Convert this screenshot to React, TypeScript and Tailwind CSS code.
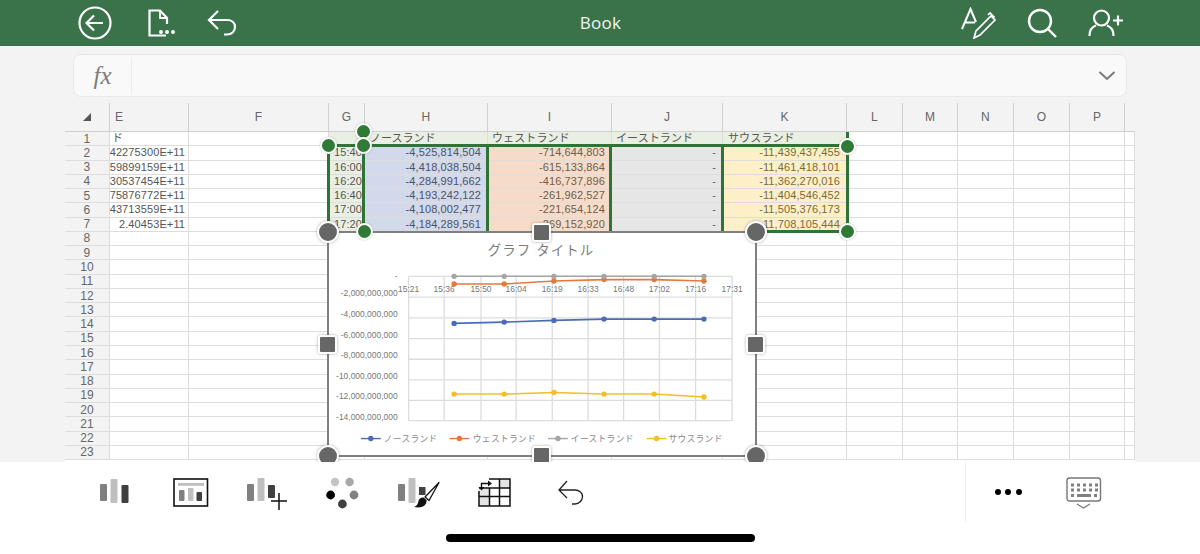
import React from 'react';

const columns = ['E', 'F', 'G', 'H', 'I', 'J', 'K', 'L', 'M', 'N', 'O', 'P', ''];

const eValues = ['42275300E+11', '59899159E+11', '30537454E+11', '75876772E+11', '43713559E+11', '2.40453E+11'];
const times = ['15:40', '16:00', '16:20', '16:40', '17:00', '17:20'];
const north = ['-4,525,814,504', '-4,418,038,504', '-4,284,991,662', '-4,193,242,122', '-4,108,002,477', '-4,184,289,561'];
const west = ['-714,644,803', '-615,133,864', '-416,737,896', '-261,962,527', '-221,654,124', '-269,152,920'];
const south = ['-11,439,437,455', '-11,461,418,101', '-11,362,270,016', '-11,404,546,452', '-11,505,376,173', '-11,708,105,444'];

const rowNumbers = Array.from({ length: 23 }, (_, i) => i + 1);

const lineCell = 'border-r-[1.5px] border-b-[1.5px] border-[#dddddd] overflow-hidden flex items-center whitespace-nowrap';

function getCell(col: string, row: number) {
  // row 1 is the table header, 2-7 hold the data
  const d = row - 2;
  if (row === 1) {
    if (col === 'E') return { cls: 'bg-white pl-[2px] text-[#555555]', text: 'ド' };
    if (col === 'G') return { cls: 'bg-[#e9efe3]', text: '' };
    if (col === 'H') return { cls: 'bg-[#e9efe3] pl-[5px] text-[#555555] tracking-[0px]', text: 'ノースランド' };
    if (col === 'I') return { cls: 'bg-[#e9efe3] pl-[4px] text-[#555555]', text: 'ウェストランド' };
    if (col === 'J') return { cls: 'bg-[#e9efe3] pl-[4px] text-[#555555]', text: 'イーストランド' };
    if (col === 'K') return { cls: 'bg-[#e9efe3] pl-[5px] text-[#555555]', text: 'サウスランド' };
    return { cls: 'bg-white', text: '' };
  }
  if (row <= 7) {
    if (col === 'E') return { cls: 'bg-white justify-end pr-[3px] text-[#555555]', text: eValues[d] };
    if (col === 'G') return { cls: 'bg-[#e9efe3] justify-end pr-[2px] text-[#555555]', text: times[d] };
    if (col === 'H') return { cls: 'bg-[#d2d9ea] justify-end pr-[6px] text-[#4d5266]', text: north[d] };
    if (col === 'I') return { cls: 'bg-[#f6dcc8] justify-end pr-[6px] text-[#6e5c50]', text: west[d] };
    if (col === 'J') return { cls: 'bg-[#e6e6e6] justify-end pr-[6px] text-[#5c5c5c]', text: '-' };
    if (col === 'K') return { cls: 'bg-[#fdf0c8] justify-end pr-[6px] text-[#7a6a38]', text: south[d] };
  }
  return { cls: 'bg-white', text: '' };
}

function GreenDot({ className }: { className: string }) {
  return (
    <div className={`absolute w-[17px] h-[17px] rounded-full bg-[#2f7a35] border-[2px] border-white shadow-[0_0_2px_rgba(0,0,0,0.25)] ${className}`} />
  );
}

function GreyDot({ className }: { className: string }) {
  return (
    <div className={`absolute w-[22px] h-[22px] rounded-full bg-[#666666] border-[2px] border-white shadow-[0_0_3px_rgba(0,0,0,0.35)] ${className}`} />
  );
}

function GreySquare({ className }: { className: string }) {
  return (
    <div className={`absolute w-[19px] h-[19px] rounded-[3px] bg-[#666666] border-[2px] border-white shadow-[0_0_3px_rgba(0,0,0,0.35)] ${className}`} />
  );
}

function Chart() {
  const gridY = [276, 297, 317.7, 338.7, 359.3, 380, 400.7, 421];
  const gridX = [409, 444.7, 481.7, 517, 553.3, 589.3, 625, 661, 697.3, 734];
  const timeLabels = ['15:21', '15:36', '15:50', '16:04', '16:19', '16:33', '16:48', '17:02', '17:16', '17:31'];
  const yLabels = ['-', '-2,000,000,000', '-4,000,000,000', '-6,000,000,000', '-8,000,000,000', '-10,000,000,000', '-12,000,000,000', '-14,000,000,000'];
  const xs = [454.7, 505, 555, 605.3, 655.7, 705.7];
  const series = [
    { color: '#4a6cb8', ys: [323.3, 322, 320.3, 319, 319, 319] },
    { color: '#e17b3c', ys: [283.7, 283.7, 280.7, 279.3, 279.3, 280.7] },
    { color: '#a5a5a5', ys: [276, 276, 276, 276, 276, 276] },
    { color: '#f6bd2b', ys: [394.3, 394.3, 392.7, 394.3, 394.3, 397.3] },
  ];
  const legend = [
    { color: '#4a6cb8', x1: 361, text: 'ノースランド', tx: 384 },
    { color: '#e17b3c', x1: 450, text: 'ウェストランド', tx: 473.5 },
    { color: '#a5a5a5', x1: 549, text: 'イーストランド', tx: 572 },
    { color: '#f6bd2b', x1: 648, text: 'サウスランド', tx: 670 },
  ];
  const font = '"Liberation Sans", "Noto Sans CJK JP", sans-serif';

  return (
    <div className="absolute left-[262px] top-[128px] w-[430px] h-[226px] bg-white border-[2px] border-[#808080]">
      <svg viewBox="329 233 428 222" className="w-full h-full block" fontFamily={font}>
        <text x="542" y="255" fontSize="13.5" letterSpacing="1.1" fill="#7c7c7c" textAnchor="middle">グラフ タイトル</text>
        {gridY.map((y) => (
          <line key={y} x1="409" x2="734" y1={y} y2={y} stroke="#dcdcdc" strokeWidth="1.3" />
        ))}
        {gridX.map((x) => (
          <line key={x} x1={x} x2={x} y1="276" y2="421" stroke="#dcdcdc" strokeWidth="1.3" />
        ))}
        {timeLabels.map((t, i) => (
          <text key={t} x={gridX[i]} y="291.8" fontSize="8.5" fill="#777777" textAnchor="middle">{t}</text>
        ))}
        {yLabels.map((t, i) => (
          <text key={t} x="398" y={gridY[i] + (i === 0 ? 1 : -0.5) + (i === 0 ? 0 : -0.5) + (i === 0 ? 2 : 0)} fontSize="8.5" fill="#777777" textAnchor="end">{t}</text>
        ))}
        {series.map((s) => (
          <g key={s.color}>
            <polyline points={s.ys.map((y, i) => `${xs[i]},${y}`).join(' ')} fill="none" stroke={s.color} strokeWidth="1.6" />
            {s.ys.map((y, i) => (
              <circle key={i} cx={xs[i]} cy={y} r="2.7" fill={s.color} />
            ))}
          </g>
        ))}
        {legend.map((l) => (
          <g key={l.text}>
            <line x1={l.x1} x2={l.x1 + 20} y1="439" y2="439" stroke={l.color} strokeWidth="1.4" />
            <circle cx={l.x1 + 10} cy="439" r="2.7" fill={l.color} />
            <text x={l.tx} y="442.5" fontSize="8.8" letterSpacing="0.3" fill="#8a8a8a">{l.text}</text>
          </g>
        ))}
      </svg>
    </div>
  );
}

function BarsIcon() {
  return (
    <svg width="29" height="36" viewBox="0 0 29 36" className="shrink-0">
      <rect x="0" y="8" width="7" height="17" rx="1" fill="#808080" />
      <rect x="10.5" y="3" width="7" height="24" rx="1" fill="#bfbfbf" />
      <rect x="21.5" y="9" width="7" height="18" rx="1" fill="#404040" />
    </svg>
  );
}

function LayoutIcon() {
  return (
    <svg width="36" height="36" viewBox="0 0 36 36" className="shrink-0 ml-[44px]">
      <rect x="1" y="3" width="33.5" height="27" fill="none" stroke="#111111" strokeWidth="1.6" />
      <rect x="5" y="7" width="26" height="2.8" fill="#bfbfbf" />
      <rect x="6" y="14" width="5.5" height="11" rx="1" fill="#808080" />
      <rect x="15" y="12" width="5.5" height="13" rx="1" fill="#bfbfbf" />
      <rect x="23.5" y="16" width="5.5" height="9" rx="1" fill="#404040" />
    </svg>
  );
}

function AddChartIcon() {
  return (
    <svg width="41" height="36" viewBox="0 0 41 36" className="shrink-0 ml-[38px]">
      <rect x="0" y="8" width="7" height="17" rx="1" fill="#808080" />
      <rect x="10.5" y="2" width="7" height="23" rx="1" fill="#bfbfbf" />
      <rect x="21" y="9" width="7" height="13" rx="1" fill="#404040" />
      <path d="M24 25h16M32 17v17" stroke="#111111" strokeWidth="1.5" fill="none" />
    </svg>
  );
}

function DotsIcon() {
  return (
    <svg width="34" height="36" viewBox="0 0 34 36" className="shrink-0 ml-[38px]">
      <circle cx="9" cy="6" r="4.2" fill="#c4c4c4" />
      <circle cx="23.6" cy="6" r="4.2" fill="#a8a8a8" />
      <circle cx="4.6" cy="19" r="4.4" fill="#000000" />
      <circle cx="28" cy="19" r="4.4" fill="#808080" />
      <circle cx="16.4" cy="28" r="4.4" fill="#404040" />
    </svg>
  );
}

function BrushIcon() {
  return (
    <svg width="43" height="36" viewBox="0 0 43 36" className="shrink-0 ml-[38px]">
      <rect x="0" y="8" width="7" height="17" rx="1" fill="#808080" />
      <rect x="10.5" y="2" width="7" height="25" rx="1" fill="#bfbfbf" />
      <rect x="21" y="11" width="6.5" height="8" fill="#404040" />
      <path d="M16 31c3-1 4-3 4.5-6 .5-2.500 3-4 5-3.500l3 2.500c.5 3-1.500 6-5 7-2.500.7-5 .5-7.500 0z" fill="#111111" />
      <path d="M27 21L41 6.500 31 24.500z" fill="#ffffff" stroke="#111111" strokeWidth="1.3" strokeLinejoin="round" />
    </svg>
  );
}

function SwitchTableIcon() {
  return (
    <svg width="33" height="36" viewBox="0 0 33 36" className="shrink-0 ml-[37px]">
      <rect x="1" y="12" width="10" height="18" fill="#e4e4e4" />
      <rect x="22" y="3" width="10" height="9" fill="#e4e4e4" />
      <path d="M11 3h21v27H1V15" fill="none" stroke="#111111" strokeWidth="1.5" />
      <path d="M1 20.500h31M1 12h31M11.500 12v18M21.500 3v27" fill="none" stroke="#111111" strokeWidth="1.5" />
      <path d="M3.500 12V7.500h8" fill="none" stroke="#111111" strokeWidth="1.4" />
      <path d="M10 4.500l4 3-4 3zM0.500 11h6l-3 3.500z" fill="#111111" />
    </svg>
  );
}

function UndoIcon() {
  return (
    <svg width="26" height="36" viewBox="0 0 26 36" className="shrink-0 ml-[47px]">
      <path d="M9 5L1 14l8 8M1 14h16c4 0 7.500 2.500 7.500 6.500S21 28 17 28h-3" fill="none" stroke="#222222" strokeWidth="1.3" />
    </svg>
  );
}

function KeyboardIcon() {
  const keyRows = [7.5, 12.5];
  const keyCols = [5, 11, 17, 23, 29];
  return (
    <svg width="36" height="36" viewBox="0 0 36 36" className="shrink-0 ml-[44px]">
      <rect x="1" y="2" width="33.5" height="23" rx="2.500" fill="none" stroke="#777777" strokeWidth="1.4" />
      {keyRows.map((y) => keyCols.map((x) => <rect key={`${x}-${y}`} x={x} y={y} width="3" height="3" fill="#808080" />))}
      <rect x="5" y="18" width="3" height="3" fill="#808080" />
      <rect x="11" y="18" width="14" height="3" fill="#808080" />
      <rect x="28" y="18" width="3" height="3" fill="#808080" />
      <path d="M11 28l6.500 4 6.500-4" fill="none" stroke="#777777" strokeWidth="1.2" />
    </svg>
  );
}

export default function App() {
  const sheetFont = 'font-["Liberation_Sans","Noto_Sans_CJK_JP",sans-serif]';

  return (
    <div className={`w-[1200px] h-[554px] bg-[#f3f3f3] flex flex-col overflow-hidden ${sheetFont}`}>
      {/* Top bar */}
      <div className="h-[46px] shrink-0 bg-[#3a7349] flex items-center text-white">
        <div className="flex-1 flex items-center pl-[77px]">
          <svg width="36" height="36" viewBox="0 0 36 36" fill="none" stroke="white" strokeWidth="2.2">
            <circle cx="18" cy="18" r="15.500" />
            <path d="M26 18H10M17 10.500L9.500 18l7.500 7.500" />
          </svg>
          <svg width="31" height="30" viewBox="0 0 31 30" fill="none" stroke="white" strokeWidth="2.2" className="ml-[33px]">
            <path d="M20 27.500H3.500V2.500H14l7 7.500v6" />
            <path d="M14 2.500V10h7" strokeWidth="1.8" />
            <circle cx="15" cy="24" r="2" fill="white" stroke="none" />
            <circle cx="21" cy="24" r="2" fill="white" stroke="none" />
            <circle cx="27" cy="24" r="2" fill="white" stroke="none" />
          </svg>
          <svg width="30" height="28" viewBox="0 0 30 28" fill="none" stroke="white" strokeWidth="2.2" className="ml-[30px]">
            <path d="M11 2L2 11l9 9M2 11h18c4.500 0 8 2.500 8 7s-3.500 7.500-8 7.500h-3" />
          </svg>
        </div>
        <div className="text-[17px] tracking-[0.3px] font-['Open_Sans',sans-serif] text-[#f1f5f1]">Book</div>
        <div className="flex-1 flex items-center justify-end pr-[76px]">
          <svg width="36" height="32" viewBox="0 0 36 32" fill="none" stroke="white" strokeWidth="2">
            <path d="M1 22L9.500 2l5.500 13M4 15.500h10" />
            <path d="M13 31l2-7 15-15 4 4-15 15zM27 8l2-2 4 4-1 2" strokeWidth="1.7" />
          </svg>
          <svg width="30" height="30" viewBox="0 0 30 30" fill="none" stroke="white" strokeWidth="2.4" className="ml-[30px]">
            <circle cx="13" cy="13" r="11" />
            <path d="M21 21l8 8" />
          </svg>
          <svg width="36" height="30" viewBox="0 0 36 30" fill="none" stroke="white" strokeWidth="2.2" className="ml-[31px]">
            <circle cx="13.500" cy="10" r="7.500" />
            <path d="M1.500 28c0-6 2-9 6.500-10.500M25.500 28c0-6-2-9-6.500-10.500M25 12.500h10M30 7.500v10" />
          </svg>
        </div>
      </div>

      {/* Formula bar */}
      <div className="mt-[8px] ml-[73px] w-[1054px] h-[43px] shrink-0 bg-[#f9f9f9] border border-[#e9e9e9] rounded-[8px] flex items-center">
        <div className="w-[58px] h-[36px] border-r border-[#ececec] flex items-center justify-center font-['Liberation_Serif',serif] italic text-[25px] text-[#7d7d7d]">
          fx
        </div>
        <div className="flex-1" />
        <svg width="18" height="12" viewBox="0 0 18 12" fill="none" stroke="#7a7a7a" strokeWidth="2" className="mr-[10px]">
          <path d="M1.500 2l7.500 7 7.500-7" />
        </svg>
      </div>

      {/* Sheet */}
      <div className="mt-[6px] ml-[65px] w-[1070px] flex-1 relative overflow-hidden bg-white">
        <div className="grid grid-cols-[45px_79px_140px_36px_123px_124px_111px_124px_56px_55px_56px_56px_55px_10px] grid-rows-[29px_repeat(23,14.27px)] text-[11px] leading-none tracking-[0.1px]">
          <div className="bg-[#f3f3f3] border-r-[1.5px] border-b-[1.5px] border-[#cfcfcf] flex items-end justify-end pr-[18px] pb-[10px]">
            <svg width="8" height="8" viewBox="0 0 8 8">
              <path d="M8 0v8H0z" fill="#555555" />
            </svg>
          </div>
          {columns.map((c, i) => (
            <div
              key={i}
              className={`bg-[#f3f3f3] border-b-[1.5px] border-[#cfcfcf] flex items-center text-[12px] text-[#666666] pb-[1px] ${c === 'E' ? 'pl-[5px]' : 'justify-center'} ${c === '' ? '' : 'border-r-[1.5px]'}`}
            >
              {c}
            </div>
          ))}
          {rowNumbers.map((row) => (
            <React.Fragment key={row}>
              <div className="bg-[#f3f3f3] border-r-[1.5px] border-b-[1.5px] border-[#dddddd] flex items-center justify-center text-[12px] text-[#666666] overflow-hidden">
                {row}
              </div>
              {columns.map((c, i) => {
                const cell = getCell(c, row);
                return (
                  <div key={i} className={`${lineCell} ${cell.cls}`}>
                    {cell.text}
                  </div>
                );
              })}
            </React.Fragment>
          ))}
        </div>

        {/* Selected ranges */}
        <div className="absolute left-[263px] top-[41px] w-[519px] h-[3px] bg-[#2f7436]" />
        <div className="absolute left-[262px] top-[42px] w-[3px] h-[87px] bg-[#2f7436]" />
        <div className="absolute left-[297px] top-[42px] w-[3px] h-[87px] bg-[#2f7436]" />
        <div className="absolute left-[421px] top-[42px] w-[3px] h-[87px] bg-[#2f7436]" />
        <div className="absolute left-[544px] top-[42px] w-[3px] h-[87px] bg-[#2f7436]" />
        <div className="absolute left-[656px] top-[42px] w-[3px] h-[87px] bg-[#2f7436]" />
        <div className="absolute left-[781px] top-[29px] w-[3px] h-[100px] bg-[#2f7436]" />
        <div className="absolute left-[691px] top-[127px] w-[93px] h-[3px] bg-[#2f7436]" />

        <Chart />

        <GreenDot className="left-[255px] top-[34px]" />
        <GreenDot className="left-[290px] top-[20px]" />
        <GreenDot className="left-[290px] top-[34px]" />
        <GreenDot className="left-[291px] top-[120px]" />
        <GreenDot className="left-[774px] top-[35px]" />
        <GreenDot className="left-[774px] top-[120px]" />

        <GreyDot className="left-[252px] top-[118px]" />
        <GreyDot className="left-[680px] top-[118px]" />
        <GreyDot className="left-[252px] top-[342px]" />
        <GreyDot className="left-[680px] top-[342px]" />

        <GreySquare className="left-[467px] top-[120px]" />
        <GreySquare className="left-[253px] top-[232px]" />
        <GreySquare className="left-[681px] top-[232px]" />
        <GreySquare className="left-[467px] top-[343px]" />
      </div>

      {/* Bottom toolbar */}
      <div className="h-[92px] shrink-0 bg-white relative flex items-start pt-[14px] pl-[100px]">
        <BarsIcon />
        <LayoutIcon />
        <AddChartIcon />
        <DotsIcon />
        <BrushIcon />
        <SwitchTableIcon />
        <UndoIcon />
        <div className="ml-[381px] -mt-[14px] h-[60px] border-l border-[#eeeeee] flex items-start pt-[14px] pl-[29px]">
          <div className="flex gap-[4.4px] mt-[13px]">
            <div className="w-[6px] h-[6px] rounded-full bg-black" />
            <div className="w-[6px] h-[6px] rounded-full bg-black" />
            <div className="w-[6px] h-[6px] rounded-full bg-black" />
          </div>
          <KeyboardIcon />
        </div>
        <div className="absolute left-[446px] top-[72px] w-[309px] h-[8px] rounded-full bg-black" />
      </div>
    </div>
  );
}
